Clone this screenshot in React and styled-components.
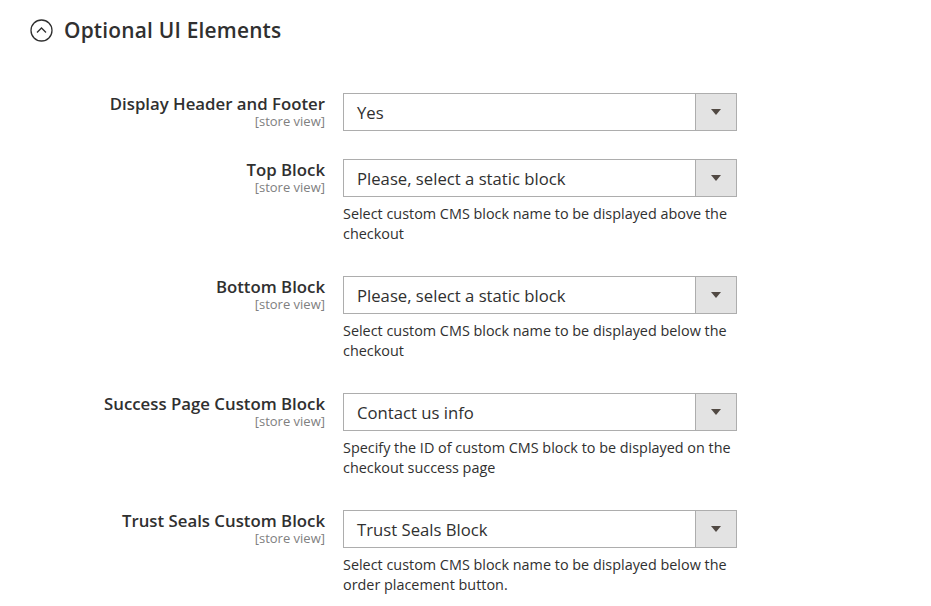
import React from 'react'
import styled, { createGlobalStyle } from 'styled-components'

const Global = createGlobalStyle`
  body {
    margin: 0;
    background: #fff;
    font-family: "Open Sans", "Liberation Sans", sans-serif;
    color: #303030;
  }
`

const Section = styled.div`
  padding: 12px 0 0 30px;
`

const Header = styled.div`
  display: flex;
  align-items: center;
  gap: 11px;
  height: 36px;
`

const Toggle = styled.svg`
  width: 23px;
  height: 23px;
  flex: none;
  margin-top: 1px;
`

const Title = styled.h2`
  margin: 0;
  font-size: 20.9px;
  font-weight: 600;
  letter-spacing: 0.2px;
  color: #303030;
`

const Fields = styled.div`
  display: flex;
  flex-direction: column;
  gap: 28px;
  padding-top: 45px;
`

const Row = styled.div`
  display: grid;
  grid-template-columns: 295px 394px;
  column-gap: 18px;
`

const Label = styled.div`
  text-align: right;
  padding-top: 1px;
`

const LabelText = styled.div`
  font-size: 16.8px;
  font-weight: 600;
  line-height: 20px;
  color: #303030;
`

const Scope = styled.div`
  font-size: 13px;
  line-height: 14px;
  color: #808080;
`

const Control = styled.div`
  display: flex;
  flex-direction: column;
`

const Select = styled.div`
  display: flex;
  height: 38px;
  box-sizing: border-box;
  border: 1px solid #adadad;
  background: #fff;
`

const Value = styled.div`
  flex: 1;
  display: flex;
  align-items: center;
  padding-left: 13px;
  font-size: 16.7px;
  color: #303030;
`

const Arrow = styled.div`
  width: 40px;
  border-left: 1px solid #adadad;
  background: #e3e3e3;
  display: flex;
  align-items: center;
  justify-content: center;

  &::after {
    content: '';
    border-left: 5px solid transparent;
    border-right: 5px solid transparent;
    border-top: 6px solid #514943;
  }
`

const Note = styled.div`
  margin: 7px 0 4px;
  font-size: 14.4px;
  line-height: 20px;
  color: #303030;
`

const fields = [
  { label: 'Display Header and Footer', value: 'Yes' },
  {
    label: 'Top Block',
    value: 'Please, select a static block',
    note: 'Select custom CMS block name to be displayed above the checkout',
  },
  {
    label: 'Bottom Block',
    value: 'Please, select a static block',
    note: 'Select custom CMS block name to be displayed below the checkout',
  },
  {
    label: 'Success Page Custom Block',
    value: 'Contact us info',
    note: 'Specify the ID of custom CMS block to be displayed on the checkout success page',
  },
  {
    label: 'Trust Seals Custom Block',
    value: 'Trust Seals Block',
    note: 'Select custom CMS block name to be displayed below the order placement button.',
  },
]

export default function App() {
  return (
    <>
      <Global />
      <Section>
        <Header>
          <Toggle viewBox="0 0 23 23">
            <circle cx="11.5" cy="11.5" r="10.5" fill="none" stroke="#303030" strokeWidth="1.3" />
            <path d="M7 13.5 L11.5 9 L16 13.5" fill="none" stroke="#303030" strokeWidth="1.3" />
          </Toggle>
          <Title>Optional UI Elements</Title>
        </Header>
        <Fields>
          {fields.map((f) => (
            <Row key={f.label}>
              <Label>
                <LabelText>{f.label}</LabelText>
                <Scope>[store view]</Scope>
              </Label>
              <Control>
                <Select>
                  <Value>{f.value}</Value>
                  <Arrow />
                </Select>
                {f.note && <Note>{f.note}</Note>}
              </Control>
            </Row>
          ))}
        </Fields>
      </Section>
    </>
  )
}
